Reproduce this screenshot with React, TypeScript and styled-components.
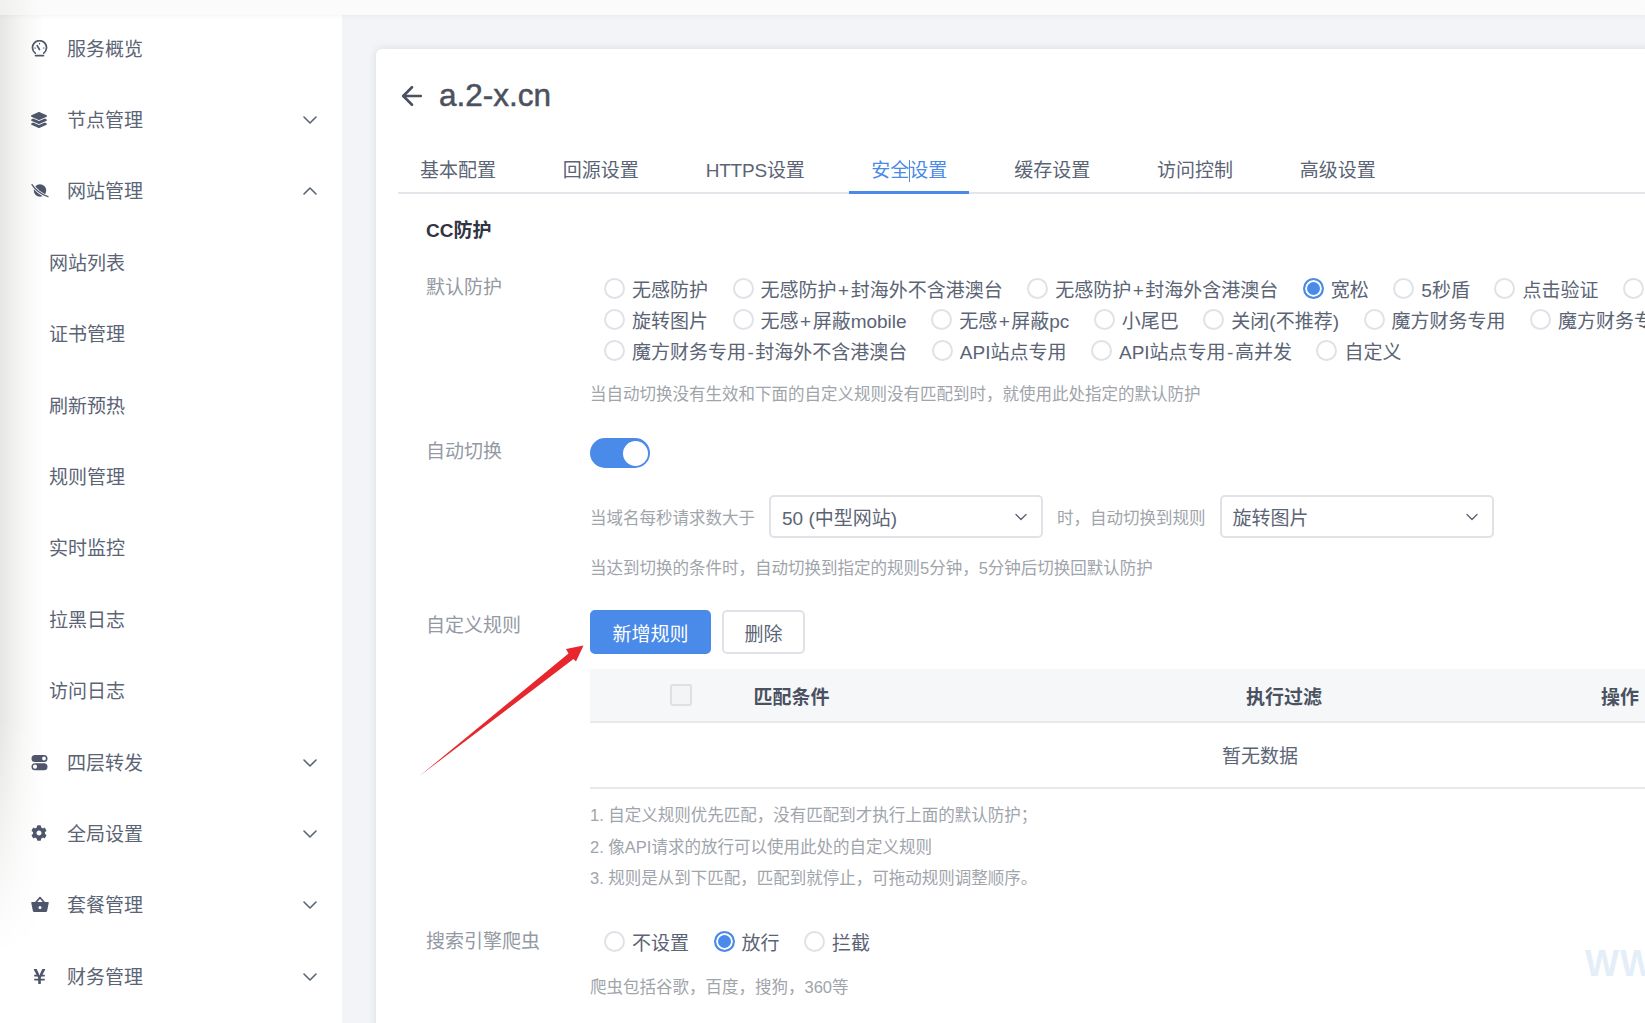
import React from "react";
import styled, { createGlobalStyle } from "styled-components";
import { ArrowLeft, ChevronDown, ChevronUp } from "lucide-react";
import { FaCog, FaLayerGroup, FaYenSign } from "react-icons/fa";

const Global = createGlobalStyle`
  html, body { margin: 0; padding: 0; height: 100%; overflow: hidden; background: #f3f4f7; }
  body { font-family: "Liberation Sans", "Noto Sans CJK SC", sans-serif; color: #5b6475; }
  * { box-sizing: border-box; }
`;

const Page = styled.div`
  position: relative;
  width: 1645px;
  height: 1023px;
  overflow: hidden;
  display: flex;
  flex-direction: column;
`;
const TopStrip = styled.div`
  position: relative;
  z-index: 2;
  height: 15px;
  flex: none;
  background: linear-gradient(to right, #f0f0ee, #fbfbfb 40px);
  box-shadow: 0 1px 5px rgba(0, 0, 0, 0.05);
`;
const Body = styled.div`
  flex: 1;
  display: flex;
  min-height: 0;
`;
const Sidebar = styled.nav`
  position: relative;
  width: 342px;
  flex: none;
  margin-top: -3.5px;
  background: #fff;
  &::before {
    content: "";
    position: absolute;
    inset: 0 auto 0 0;
    width: 44px;
    background: linear-gradient(to right, #e6e6e4, #f6f6f5 50%, #fff);
    -webkit-mask-image: linear-gradient(to bottom, #000 70%, transparent 93%);
    mask-image: linear-gradient(to bottom, #000 70%, transparent 93%);
  }
`;
const MenuRow = styled.div`
  position: relative;
  height: 71.4px;
  display: flex;
  align-items: center;
  padding-right: 20px;
  font-size: 19px;
  color: #5b6475;
`;
const MenuIcon = styled.span`
  width: 67px;
  padding: 2px 0 0 31px;
  flex: none;
  display: flex;
  align-items: center;
  color: #4f566b;
  svg { display: block; }
`;
const MenuText = styled.span`
  flex: 1;
`;
const MenuChevron = styled.span`
  display: flex;
  padding-top: 3px;
`;
const SubRow = styled(MenuRow)`
  padding-left: 49px;
`;
const Main = styled.main`
  flex: 1;
  min-width: 0;
  padding: 34px 0 0 34px;
  overflow: hidden;
`;
const Card = styled.section`
  width: 1400px;
  height: 1100px;
  background: #fff;
  border-radius: 6px;
  box-shadow: 0 0 8px rgba(40, 50, 70, 0.12);
`;
const Header = styled.header`
  height: 97px;
  padding: 28px 0 0 21px;
  display: flex;
  align-items: flex-start;
  gap: 12px;
  color: #4a5160;
  svg { margin-top: 4px; flex: none; }
`;
const Title = styled.h1`
  margin: 0;
  font-size: 31.5px;
  line-height: 36px;
  font-weight: 500;
  color: #4a5160;
  -webkit-text-stroke: 0.5px #4a5160;
`;
const Tabs = styled.div`
  margin-left: 22px;
  height: 48px;
  display: flex;
  gap: 22.8px;
  border-bottom: 2px solid #e4e6eb;
`;
const Tab = styled.div<{ $active?: boolean; $tight?: boolean }>`
  position: relative;
  height: 48px;
  padding: 13px 22px 0;
  font-size: 19px;
  line-height: 24px;
  letter-spacing: ${(p) => (p.$tight ? "-0.2px" : "0")};
  color: ${(p) => (p.$active ? "#4a8ae8" : "#5b6475")};
  border-bottom: 3px solid ${(p) => (p.$active ? "#4a8ae8" : "transparent")};
`;
const Caret = styled.span`
  display: inline-block;
  width: 1px;
  height: 22px;
  margin: 0 -0.5px;
  background: #4a8ae8;
  vertical-align: -5px;
`;
const Content = styled.div`
  padding: 24px 0 0 50px;
`;
const SectionTitle = styled.h2`
  margin: 0;
  font-size: 19px;
  line-height: 26px;
  font-weight: 700;
  color: #2f3542;
`;
const FormRow = styled.div<{ $top: number }>`
  display: grid;
  grid-template-columns: 164px 1fr;
  margin-top: ${(p) => p.$top}px;
`;
const Label = styled.div<{ $pad?: number }>`
  padding-top: ${(p) => p.$pad ?? 1}px;
  font-size: 19px;
  line-height: 26px;
  color: #9499a3;
`;
const Field = styled.div`
  min-width: 0;
`;
const RadioGroup = styled.div<{ $top?: number }>`
  margin: ${(p) => p.$top ?? 0}px 0 0 14px;
`;
const RadioLine = styled.div`
  height: 31px;
  display: flex;
  align-items: center;
  gap: 24.5px;
  white-space: nowrap;
`;
const RadioItem = styled.label`
  display: flex;
  align-items: center;
  gap: 7px;
  font-size: 19px;
  color: #5b6475;
`;
const RadioMark = styled.span<{ $on?: boolean }>`
  width: 21px;
  height: 21px;
  flex: none;
  border-radius: 50%;
  border: 2px solid ${(p) => (p.$on ? "#4a8ae8" : "#e0e2e7")};
  background: ${(p) => (p.$on ? "#4a8ae8" : "#fff")};
  box-shadow: ${(p) => (p.$on ? "inset 0 0 0 2px #fff" : "none")};
`;
const RadioText = styled.span`
  display: inline-block;
`;
const Sym = styled.span`
  padding: 0 1.5px;
`;
const Hint = styled.div<{ $top: number }>`
  margin-top: ${(p) => p.$top}px;
  font-size: 16.5px;
  line-height: 24px;
  color: #a0a4ab;
  white-space: nowrap;
`;
const Switch = styled.div`
  width: 60px;
  height: 30px;
  padding: 2.5px;
  border-radius: 15px;
  background: #4a8ae8;
  display: flex;
  justify-content: flex-end;
`;
const Knob = styled.span`
  width: 25px;
  height: 25px;
  border-radius: 50%;
  background: #fff;
`;
const InlineRow = styled.div`
  margin-top: 27px;
  display: flex;
  align-items: center;
  white-space: nowrap;
`;
const InlineText = styled.span`
  font-size: 16.5px;
  color: #a0a4ab;
`;
const Select = styled.div<{ $w: number; $l: number; $r: number }>`
  width: ${(p) => p.$w}px;
  height: 43px;
  margin: 0 ${(p) => p.$r}px 0 ${(p) => p.$l}px;
  padding: 0 10px 0 11px;
  border: 2px solid #e0e2e7;
  border-radius: 5px;
  display: flex;
  align-items: center;
  justify-content: space-between;
  font-size: 19px;
  color: #5b6475;
`;
const Buttons = styled.div`
  display: flex;
  gap: 11px;
`;
const Button = styled.button<{ $primary?: boolean; $w: number }>`
  width: ${(p) => p.$w}px;
  height: 44px;
  padding: 0;
  border-radius: 5px;
  border: 2px solid ${(p) => (p.$primary ? "#4a8ae8" : "#e0e2e7")};
  background: ${(p) => (p.$primary ? "#4a8ae8" : "#fff")};
  color: ${(p) => (p.$primary ? "#fff" : "#5b6475")};
  font: 19px "Liberation Sans", "Noto Sans CJK SC", sans-serif;
`;
const Table = styled.div`
  width: 1340px;
  margin-top: 15px;
`;
const TableHead = styled.div`
  height: 54px;
  display: grid;
  grid-template-columns: 80px 83.5px 492.5px 355px 1fr;
  align-items: center;
  background: #f6f7f9;
  border-bottom: 2px solid #e8e9ed;
  font-size: 19px;
  font-weight: 700;
  color: #4a5160;
`;
const Check = styled.span`
  grid-column: 2;
  width: 22px;
  height: 22px;
  border: 2px solid #dfe0e4;
  border-radius: 3px;
  background: #f3f4f6;
`;
const TableEmpty = styled.div`
  height: 66px;
  padding-bottom: 2px;
  display: flex;
  align-items: center;
  justify-content: center;
  border-bottom: 2px solid #e8e9ed;
  font-size: 19px;
  color: #5b6475;
`;
const Notes = styled.div`
  margin-top: 11px;
  font-size: 16.5px;
  line-height: 31.5px;
  color: #a0a4ab;
`;
const Watermark = styled.div`
  position: absolute;
  left: 1585px;
  top: 944px;
  font-size: 36px;
  line-height: 40px;
  font-weight: 700;
  letter-spacing: 1px;
  color: #e4eef8;
`;
const ArrowOverlay = styled.svg`
  position: absolute;
  left: 410px;
  top: 640px;
  pointer-events: none;
`;

const GaugeIcon = () => (
  <svg width="17" height="17" viewBox="0 0 17 17" fill="none" stroke="currentColor" strokeWidth="1.7" strokeLinecap="round">
    <path d="M4.2 13.2A7 7 0 1 1 12.8 13.2" />
    <path d="M4.5 15.6h8" />
    <path d="M8.5 9.5 6.2 5.6" />
    <path d="M3.8 8h.6M13 8h-.6M8.5 3.4v.5" strokeWidth="1.2" />
  </svg>
);
const PlanetIcon = () => (
  <svg width="18" height="17" viewBox="0 0 18 17" fill="none" strokeLinecap="round">
    <circle cx="9" cy="8.5" r="6.2" fill="currentColor" />
    <path d="M1 2.6C4 7.5 10.5 13 17 14.6" stroke="#fff" strokeWidth="3" />
    <path d="M1 2.6C4 7.5 10.5 13 17 14.6" stroke="currentColor" strokeWidth="1.3" />
  </svg>
);
const BasketIcon = () => (
  <svg width="18" height="17" viewBox="0 0 18 17" fill="currentColor">
    <path d="M4.4 6.8 9 1.6l4.6 5.2" fill="none" stroke="currentColor" strokeWidth="1.6" strokeLinejoin="round" />
    <path fillRule="evenodd" d="M1 6h16a.7.7 0 0 1 .7.9l-1.6 8a1.4 1.4 0 0 1-1.4 1.1H3.3a1.4 1.4 0 0 1-1.4-1.1L.3 6.9A.7.7 0 0 1 1 6Zm8 4.1a1.5 1.5 0 1 0 0 3 1.5 1.5 0 0 0 0-3Z" />
  </svg>
);
const TogglesIcon = () => (
  <svg width="17" height="17" viewBox="0 0 17 17" fill="currentColor">
    <path fillRule="evenodd" d="M4 1h9a3.5 3.5 0 0 1 0 7H4a3.5 3.5 0 0 1 0-7Zm9 1.6a1.9 1.9 0 1 0 0 3.8 1.9 1.9 0 0 0 0-3.8Z" />
    <path fillRule="evenodd" d="M4 9.2h9a3.5 3.5 0 0 1 0 7H4a3.5 3.5 0 0 1 0-7Zm0 1.4a2.1 2.1 0 1 0 0 4.2 2.1 2.1 0 0 0 0-4.2Z" />
  </svg>
);

const Radio = ({ text, on }: { text: string; on?: boolean }) => (
  <RadioItem>
    <RadioMark $on={on} />
    {text && (
      <RadioText>
        {text.split(/([+-])/).map((part, i) => (part === "+" || part === "-" ? <Sym key={i}>{part}</Sym> : part))}
      </RadioText>
    )}
  </RadioItem>
);

type Item = { text: string; icon: React.ReactNode; chevron?: string };
const topMenu: Item[] = [
  { text: "服务概览", icon: <GaugeIcon /> },
  { text: "节点管理", icon: <FaLayerGroup size={16} />, chevron: "down" },
  { text: "网站管理", icon: <PlanetIcon />, chevron: "up" },
];
const subMenu = ["网站列表", "证书管理", "刷新预热", "规则管理", "实时监控", "拉黑日志", "访问日志"];
const bottomMenu: Item[] = [
  { text: "四层转发", icon: <TogglesIcon />, chevron: "down" },
  { text: "全局设置", icon: <FaCog size={16} />, chevron: "down" },
  { text: "套餐管理", icon: <BasketIcon />, chevron: "down" },
  { text: "财务管理", icon: <FaYenSign size={17} />, chevron: "down" },
];

const Menu = ({ item }: { item: Item }) => (
  <MenuRow>
    <MenuIcon>{item.icon}</MenuIcon>
    <MenuText>{item.text}</MenuText>
    {item.chevron && (
      <MenuChevron>
        {item.chevron === "down" ? <ChevronDown size={24} strokeWidth={1.6} /> : <ChevronUp size={24} strokeWidth={1.6} />}
      </MenuChevron>
    )}
  </MenuRow>
);

const lines: { text: string; on?: boolean }[][] = [
  [
    { text: "无感防护" },
    { text: "无感防护+封海外不含港澳台" },
    { text: "无感防护+封海外含港澳台" },
    { text: "宽松", on: true },
    { text: "5秒盾" },
    { text: "点击验证" },
    { text: "" },
  ],
  [
    { text: "旋转图片" },
    { text: "无感+屏蔽mobile" },
    { text: "无感+屏蔽pc" },
    { text: "小尾巴" },
    { text: "关闭(不推荐)" },
    { text: "魔方财务专用" },
    { text: "魔方财务专用-封海外" },
  ],
  [
    { text: "魔方财务专用-封海外不含港澳台" },
    { text: "API站点专用" },
    { text: "API站点专用-高并发" },
    { text: "自定义" },
  ],
];

export default function App() {
  return (
    <Page>
      <Global />
      <TopStrip />
      <Body>
        <Sidebar>
          {topMenu.map((m) => (
            <Menu key={m.text} item={m} />
          ))}
          {subMenu.map((s) => (
            <SubRow key={s}>{s}</SubRow>
          ))}
          {bottomMenu.map((m) => (
            <Menu key={m.text} item={m} />
          ))}
        </Sidebar>
        <Main>
          <Card>
            <Header>
              <ArrowLeft size={30} strokeWidth={2.1} />
              <Title>a.2-x.cn</Title>
            </Header>
            <Tabs>
              <Tab>基本配置</Tab>
              <Tab>回源设置</Tab>
              <Tab $tight>HTTPS设置</Tab>
              <Tab $active>
                安全
                <Caret />
                设置
              </Tab>
              <Tab>缓存设置</Tab>
              <Tab>访问控制</Tab>
              <Tab>高级设置</Tab>
            </Tabs>
            <Content>
              <SectionTitle>CC防护</SectionTitle>
              <FormRow $top={30}>
                <Label>默认防护</Label>
                <Field>
                  <RadioGroup $top={-1.5}>
                    {lines.map((line, i) => (
                      <RadioLine key={i}>
                        {line.map((r, j) => (
                          <Radio key={j} text={r.text} on={r.on} />
                        ))}
                      </RadioLine>
                    ))}
                  </RadioGroup>
                  <Hint $top={16.5}>当自动切换没有生效和下面的自定义规则没有匹配到时，就使用此处指定的默认防护</Hint>
                </Field>
              </FormRow>
              <FormRow $top={32}>
                <Label>自动切换</Label>
                <Field>
                  <Switch>
                    <Knob />
                  </Switch>
                  <InlineRow>
                    <InlineText>当域名每秒请求数大于</InlineText>
                    <Select $w={274} $l={14} $r={14}>
                      50 (中型网站)
                      <ChevronDown size={20} strokeWidth={1.6} />
                    </Select>
                    <InlineText>时，自动切换到规则</InlineText>
                    <Select $w={274} $l={14} $r={0}>
                      旋转图片
                      <ChevronDown size={20} strokeWidth={1.6} />
                    </Select>
                  </InlineRow>
                  <Hint $top={18}>当达到切换的条件时，自动切换到指定的规则5分钟，5分钟后切换回默认防护</Hint>
                </Field>
              </FormRow>
              <FormRow $top={30}>
                <Label $pad={3}>自定义规则</Label>
                <Field>
                  <Buttons>
                    <Button $primary $w={121}>新增规则</Button>
                    <Button $w={83}>删除</Button>
                  </Buttons>
                  <Table>
                    <TableHead>
                      <Check />
                      <span>匹配条件</span>
                      <span>执行过滤</span>
                      <span>操作</span>
                    </TableHead>
                    <TableEmpty>暂无数据</TableEmpty>
                  </Table>
                  <Notes>
                    <div>1. 自定义规则优先匹配，没有匹配到才执行上面的默认防护；</div>
                    <div>2. 像API请求的放行可以使用此处的自定义规则</div>
                    <div>3. 规则是从到下匹配，匹配到就停止，可拖动规则调整顺序。</div>
                  </Notes>
                </Field>
              </FormRow>
              <FormRow $top={31}>
                <Label $pad={3}>搜索引擎爬虫</Label>
                <Field>
                  <RadioGroup>
                    <RadioLine>
                      <Radio text="不设置" />
                      <Radio text="放行" on />
                      <Radio text="拦截" />
                    </RadioLine>
                  </RadioGroup>
                  <Hint $top={18}>爬虫包括谷歌，百度，搜狗，360等</Hint>
                </Field>
              </FormRow>
            </Content>
          </Card>
        </Main>
      </Body>
      <Watermark>WWW</Watermark>
      <ArrowOverlay width="180" height="140" viewBox="0 0 180 140">
        <path d="M9.5 136 L158.5 13.5 L156 9 L173.5 5.5 L166 21.5 L163.5 19 Z" fill="#e8262d" />
      </ArrowOverlay>
    </Page>
  );
}
